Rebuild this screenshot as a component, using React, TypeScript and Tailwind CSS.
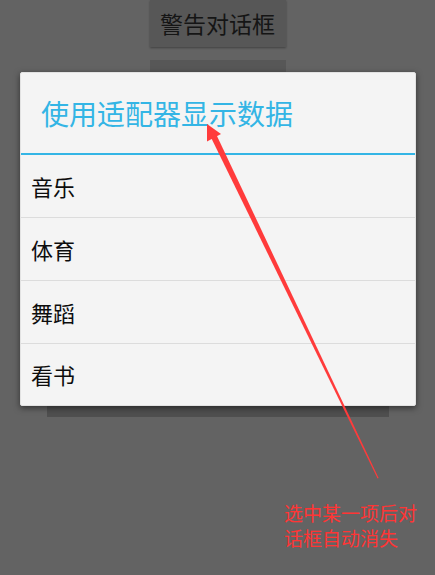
const cjk = { fontFamily: '"Noto Sans CJK SC", "Noto Sans", sans-serif' };

const items = ['音乐', '体育', '舞蹈', '看书'];

export default function App() {
  return (
    <div className="relative w-[435px] h-[575px] overflow-hidden bg-[#636363]" style={cjk}>
      {/* activity behind the dim */}
      <div className="flex flex-col items-center">
        <div className="w-[136px] h-[47px] bg-[#575757] shadow-[0_1px_2px_rgba(0,0,0,0.35)] flex items-center justify-center text-[23px] text-[#151515]">
          警告对话框
        </div>
        <div className="mt-[13px] w-[136px] h-[47px] bg-[#575757]" />
        <div className="mt-[12px] w-[342px] h-[298px] bg-[#4f4f4f]" />
      </div>

      {/* dialog */}
      <div className="absolute left-[20px] top-[72px] w-[396px] flex flex-col bg-[#f4f4f4] rounded-[2px] border border-[#e2e2e2] shadow-[0_2px_6px_rgba(0,0,0,0.5)]">
        <div className="h-[80px] flex items-center pl-[20px] text-[28px] text-[#33b5e5]">
          使用适配器显示数据
        </div>
        <div className="h-[2px] bg-[#33b5e5]" />
        {items.map((t, i) => (
          <div key={t} className="flex flex-col">
            {i > 0 && <div className="h-px bg-[#dcdcdc]" />}
            <div className={`${i === 3 ? 'h-[61px]' : 'h-[62px]'} flex items-center pl-[10px] text-[22px] text-[#0d0d0d]`}>
              {t}
            </div>
          </div>
        ))}
      </div>

      {/* annotation arrow */}
      <svg className="absolute inset-0" width="435" height="575" viewBox="0 0 435 575">
        <polygon points="207,124 221,134 207,141.5" fill="#ff3b3b" />
        <polygon points="211,137.5 216.5,135 378.6,478 377.6,478.4" fill="#ff3b3b" />
      </svg>

      {/* annotation text */}
      <div className="absolute left-[284px] top-[500px] text-[19px] leading-[25px] text-[#ff3535]">
        选中某一项后对
        <br />
        话框自动消失
      </div>
    </div>
  );
}
